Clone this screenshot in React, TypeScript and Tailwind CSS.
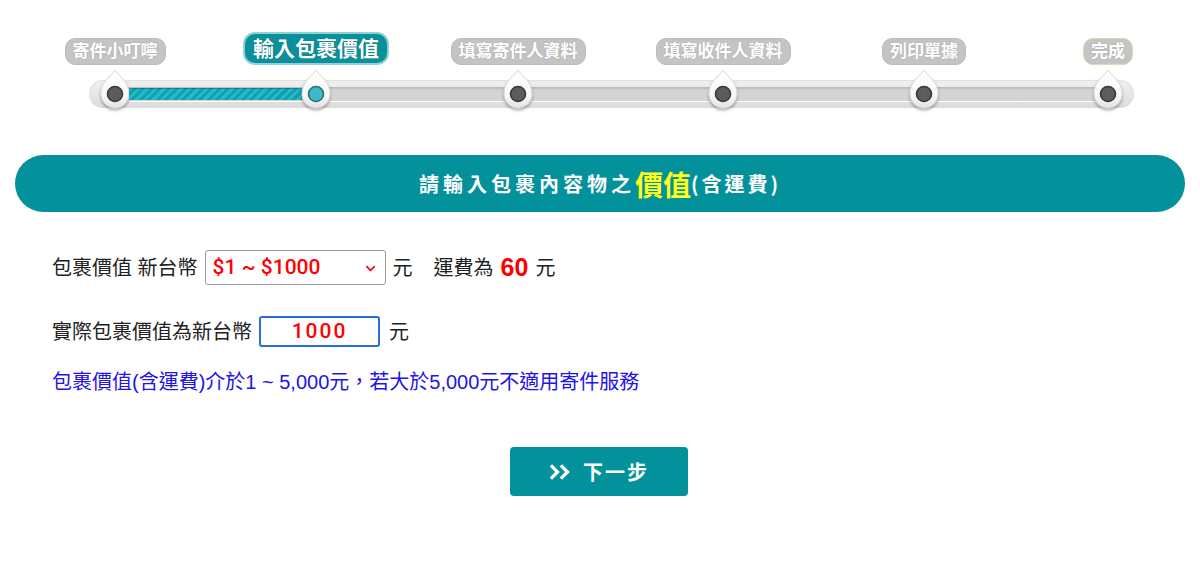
import { ChevronDown } from "lucide-react";

type Step = {
    label: string;
    gapClass: string; // distance from previous marker centre
};

const STEPS: Step[] = [
    { label: "寄件小叮嚀", gapClass: "ml-[115px]" },
    { label: "輸入包裹價值", gapClass: "ml-[201px]" },
    { label: "填寫寄件人資料", gapClass: "ml-[202px]" },
    { label: "填寫收件人資料", gapClass: "ml-[205px]" },
    { label: "列印單據", gapClass: "ml-[201px]" },
    { label: "完成", gapClass: "ml-[184px]" },
];

const CURRENT = 1;

// segment widths between markers (marker is 28px wide)
const SEGMENTS = ["w-[173px]", "w-[174px]", "w-[177px]", "w-[173px]", "w-[156px]"];

function Marker({ active }: { active: boolean }) {
    return (
        <div className="w-[28px] h-[28px] flex items-center justify-center shrink-0">
            <svg width="34" height="54" viewBox="0 0 34 54" className="shrink-0">
                <defs>
                    <linearGradient id={active ? "dropA" : "dropN"} x1="0" y1="0" x2="0" y2="1">
                        <stop offset="0" stopColor="#ffffff" />
                        <stop offset="0.7" stopColor="#f7f7f7" />
                        <stop offset="1" stopColor="#e2e2e2" />
                    </linearGradient>
                    <filter id="mShadow" x="-40%" y="-40%" width="180%" height="180%">
                        <feDropShadow dx="0" dy="2" stdDeviation="1.6" floodColor="#000" floodOpacity="0.35" />
                    </filter>
                </defs>
                <path
                    d="M17 3 C19.5 9, 31 13, 31 27 A14 14 0 1 1 3 27 C3 13, 14.5 9, 17 3 Z"
                    fill={`url(#${active ? "dropA" : "dropN"})`}
                    stroke="#d4d4d4"
                    strokeWidth="0.8"
                    filter="url(#mShadow)"
                />
                <circle
                    cx="17"
                    cy="27"
                    r="7.5"
                    fill={active ? "#3db8c5" : "#5c5c5c"}
                    stroke={active ? "#2f6e74" : "#3a3a3a"}
                    strokeWidth="1.6"
                />
            </svg>
        </div>
    );
}

function Stepper() {
    return (
        <div className="pt-[32px]">
            {/* labels */}
            <div className="flex items-end h-[33px]">
                {STEPS.map((step, i) => (
                    <div key={step.label} className={`${step.gapClass} w-0 flex justify-center`}>
                        {i === CURRENT ? (
                            <span className="shrink-0 whitespace-nowrap h-[33px] px-[8px] flex items-center rounded-[12px] bg-[#09909a] border-2 border-[#8fd3d7] text-white text-[21px] font-bold leading-none [text-shadow:0_0_1px_rgba(0,0,0,0.3)]">
                                {step.label}
                            </span>
                        ) : (
                            <span
                                className={`shrink-0 whitespace-nowrap h-[27px] px-[7px] flex items-center rounded-[10px] bg-[#c4c4c4] border text-white text-[17px] font-bold leading-none [text-shadow:0_0_2px_rgba(0,0,0,0.15)] ${
                                    i === STEPS.length - 1 ? "border-[#d3dcb6]" : "border-[#bcbcbc]"
                                }`}
                            >
                                {step.label}
                            </span>
                        )}
                    </div>
                ))}
            </div>

            {/* track */}
            <div className="mt-[15px] ml-[89px] w-[1045px] h-[28px] rounded-full bg-gradient-to-b from-[#f1f1f1] via-[#e6e6e6] to-[#dcdcdc] shadow-[inset_0_1px_2px_rgba(0,0,0,0.08)] flex items-center px-[12px]">
                <div className="flex items-center w-full h-[14px] rounded-full bg-[#d4d4d4] shadow-[inset_0_2px_2px_rgba(0,0,0,0.12),0_1px_0_rgba(255,255,255,0.9)]">
                    {STEPS.map((step, i) => (
                        <div key={step.label} className="flex items-center">
                            <Marker active={i === CURRENT} />
                            {i < SEGMENTS.length && (
                                <div
                                    className={`${SEGMENTS[i]} h-[12px] ${
                                        i < CURRENT
                                            ? "bg-[repeating-linear-gradient(135deg,#22b9c8_0px,#22b9c8_3px,#139fae_3px,#139fae_6px)] shadow-[inset_0_1px_1px_rgba(0,0,0,0.25)]"
                                            : ""
                                    }`}
                                />
                            )}
                        </div>
                    ))}
                </div>
            </div>
        </div>
    );
}

export default function App() {
    return (
        <div className="w-[1200px] h-[566px] bg-white overflow-hidden font-['Liberation_Sans','Noto_Sans_CJK_TC',sans-serif] text-[#222]">
            <Stepper />

            <div className="mt-[47px] mx-[15px] h-[57px] rounded-full bg-[#03919b] flex items-center justify-center text-white font-bold">
                <span className="text-[20px] tracking-[4px] font-['Noto_Sans_CJK_TC',sans-serif]">請輸入包裹內容物之</span>
                <span className="text-[28px] text-[#ffff1a] font-['Noto_Sans_CJK_TC',sans-serif] leading-none">價值</span>
                <span className="text-[20px] tracking-[3px] font-['Noto_Sans_CJK_TC',sans-serif]">(含運費)</span>
            </div>

            <div className="ml-[52px] mt-[38px] text-[20px] font-['Liberation_Sans','Noto_Sans_CJK_TC',sans-serif]">
                <div className="flex items-center h-[35px]">
                    <span>包裹價值 新台幣</span>
                    <div className="relative ml-[7px] w-[181px] h-[35px]">
                        <select
                            defaultValue="1000"
                            className="appearance-none w-full h-full border border-[#9a9a9a] rounded-[3px] bg-white pl-[7px] text-[21px] text-[#ff0000] font-medium font-['Roboto',sans-serif] outline-none"
                        >
                            <option value="1000">$1 ~ $1000</option>
                            <option value="2000">$1001 ~ $2000</option>
                            <option value="3000">$2001 ~ $3000</option>
                            <option value="4000">$3001 ~ $4000</option>
                            <option value="5000">$4001 ~ $5000</option>
                        </select>
                        <ChevronDown
                            size={15}
                            strokeWidth={2.6}
                            className="absolute right-[8px] top-[11px] text-[#ff0000] pointer-events-none"
                        />
                    </div>
                    <span className="ml-[7px]">元</span>
                    <span className="ml-[21px]">運費為</span>
                    <span className="ml-[7px] text-[25px] font-bold text-[#ff0000]">60</span>
                    <span className="ml-[7px]">元</span>
                </div>

                <div className="flex items-center h-[31px] mt-[31px]">
                    <span>實際包裹價值為新台幣</span>
                    <input
                        readOnly
                        value="1000"
                        className="ml-[7px] w-[121px] h-[31px] border-2 border-[#2a6fd8] rounded-[3px] text-center text-[21px] font-medium font-['Roboto',sans-serif] tracking-[2px] text-[#ff0000] outline-none"
                    />
                    <span className="ml-[9px]">元</span>
                </div>

                <p className="mt-[23px] leading-[24px] text-[#2312ea]">
                    包裹價值(含運費)介於1 ~ 5,000元，若大於5,000元不適用寄件服務
                </p>
            </div>

            <button className="mt-[53px] ml-[510px] w-[178px] h-[49px] rounded-[4px] bg-[#03919b] text-white flex items-center justify-center gap-[10px]">
                <svg width="24" height="16" viewBox="0 0 24 16" fill="none" stroke="white" strokeWidth="3.2" strokeLinecap="square">
                    <path d="M3 2.5 L8.5 8 L3 13.5" />
                    <path d="M13 2.5 L18.5 8 L13 13.5" />
                </svg>
                <span className="text-[20px] font-bold tracking-[2px] font-['Noto_Sans_CJK_TC',sans-serif]">下一步</span>
            </button>
        </div>
    );
}
